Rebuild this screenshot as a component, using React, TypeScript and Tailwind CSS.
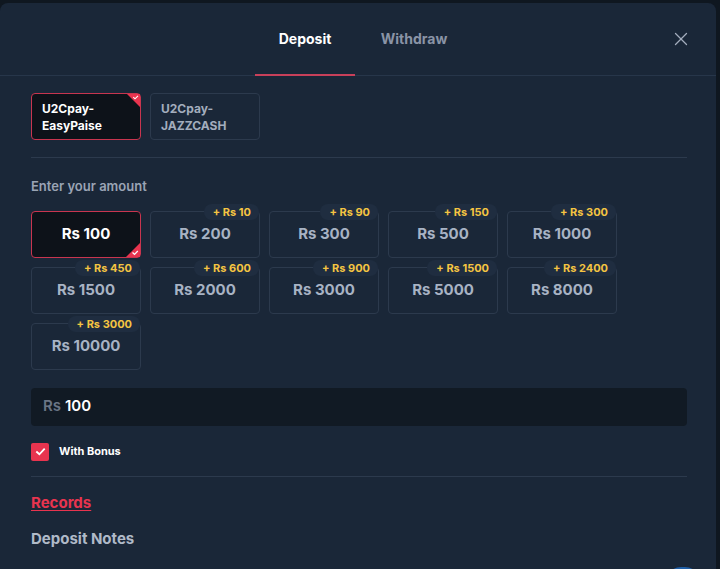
import { X } from "lucide-react";

type Amount = { value: number; bonus?: number };

const amounts: Amount[] = [
  { value: 100 },
  { value: 200, bonus: 10 },
  { value: 300, bonus: 90 },
  { value: 500, bonus: 150 },
  { value: 1000, bonus: 300 },
  { value: 1500, bonus: 450 },
  { value: 2000, bonus: 600 },
  { value: 3000, bonus: 900 },
  { value: 5000, bonus: 1500 },
  { value: 8000, bonus: 2400 },
  { value: 10000, bonus: 3000 },
];

function CornerCheck() {
  return (
    <span className="absolute bottom-0 right-0 h-[14px] w-[14px]">
      <svg viewBox="0 0 14 14" className="h-full w-full">
        <path d="M14 0 L14 14 L0 14 Z" fill="#e8344f" />
        <path d="M6.5 9.5 L8.5 11.3 L11.8 8" fill="none" stroke="#fff" strokeWidth="1.2" />
      </svg>
    </span>
  );
}

function TopCornerCheck() {
  return (
    <span className="absolute right-0 top-0 h-[13px] w-[13px]">
      <svg viewBox="0 0 13 13" className="h-full w-full">
        <path d="M0 0 L13 0 L13 13 Z" fill="#e8344f" />
        <path d="M6.3 3.2 L8 4.8 L11 1.8" fill="none" stroke="#fff" strokeWidth="1.1" />
      </svg>
    </span>
  );
}

function App() {
  return (
    <div
      className="h-[569px] w-[720px] overflow-hidden bg-[#0f1720] pt-[3px]"
      style={{ fontFamily: "Inter, 'Noto Sans', sans-serif" }}
    >
      <div className="h-[574px] w-[716px] rounded-lg bg-[#1a2738]">
        <div className="relative flex h-[73px] items-end justify-center border-b border-[#27364a]">
          <div className="ml-[12px] flex">
            <button
              type="button"
              className="relative flex h-[72px] w-[100px] items-center justify-center text-[14px] font-bold text-white"
            >
              <span className="-mt-[2px]">Deposit</span>
              <span className="absolute bottom-[-1px] left-0 h-[2px] w-full bg-[#c8405a]" />
            </button>
            <button
              type="button"
              className="flex h-[72px] w-[118px] items-center justify-center text-[14px] font-bold text-[#8a94a6]"
            >
              <span className="-mt-[2px]">Withdraw</span>
            </button>
          </div>
          <button
            type="button"
            className="absolute right-[24px] top-[25px] text-[#a3adbd]"
          >
            <X size={22} strokeWidth={1.4} />
          </button>
        </div>

        <div className="px-[31px] pr-[29px]">
          <div className="flex gap-[9px] pt-[17px]">
            <button
              type="button"
              className="relative h-[47px] w-[110px] rounded border border-[#c8354f] bg-[#0d1219] px-[10px] text-left text-[12px] font-bold leading-[17px] text-white"
            >
              U2Cpay-
              <br />
              EasyPaise
              <TopCornerCheck />
            </button>
            <button
              type="button"
              className="h-[47px] w-[110px] rounded border border-[#2c3a4d] px-[10px] text-left text-[12px] font-bold leading-[17px] text-[#a3adbd]"
            >
              U2Cpay-
              <br />
              JAZZCASH
            </button>
          </div>

          <div className="mt-[17px] border-t border-[#2c3a4d]" />

          <p className="mt-[19px] text-[13px] font-semibold text-[#9aa4b5]">Enter your amount</p>

          <div className="mt-[14px] grid grid-cols-[repeat(5,110px)] gap-[9px]">
            {amounts.map((a, i) => {
              const active = i === 0;
              return (
                <button
                  key={a.value}
                  type="button"
                  className={
                    active
                      ? "relative h-[47px] rounded border border-[#c8354f] bg-[#0d1219] text-[15px] font-bold text-white"
                      : "relative h-[47px] rounded border border-[#2c3a4d] text-[15px] font-bold text-[#a8b3c4]"
                  }
                >
                  Rs {a.value}
                  {a.bonus && (
                    <span className="absolute right-0 top-[-8px] rounded-full bg-[#1f2d40] py-[1px] pl-[9px] pr-[8px] text-[11px] font-bold leading-[14px] text-[#f5c542]">
                      + Rs {a.bonus}
                    </span>
                  )}
                  {active && <CornerCheck />}
                </button>
              );
            })}
          </div>

          <div className="mt-[18px] flex h-[38px] items-center rounded bg-[#111a24] px-[12px] text-[15px] font-semibold">
            <span className="text-[#6b7585]">Rs</span>
            <span className="ml-[4px] text-white">100</span>
          </div>

          <label className="mt-[17px] flex items-center gap-[10px]">
            <span className="flex h-[18px] w-[18px] items-center justify-center rounded-[2px] bg-[#e8344f]">
              <svg viewBox="0 0 14 14" className="h-[13px] w-[13px]">
                <path d="M2.5 7 L5.8 10 L11.5 4" fill="none" stroke="#fff" strokeWidth="2" />
              </svg>
            </span>
            <span className="text-[11px] font-bold text-white">With Bonus</span>
          </label>

          <div className="mt-[15px] border-t border-[#2c3a4d]" />

          <p className="mt-[15px] text-[15px] font-bold text-[#e8344f] underline underline-offset-2">
            Records
          </p>
          <p className="mt-[14px] text-[15px] font-bold text-[#b0bac8]">Deposit Notes</p>
        </div>
      </div>
      <div className="relative">
        <span className="absolute bottom-[-20px] right-[20px] h-[30px] w-[34px] rounded-full bg-[#1f5fa8]" />
      </div>
    </div>
  );
}

export default App;
